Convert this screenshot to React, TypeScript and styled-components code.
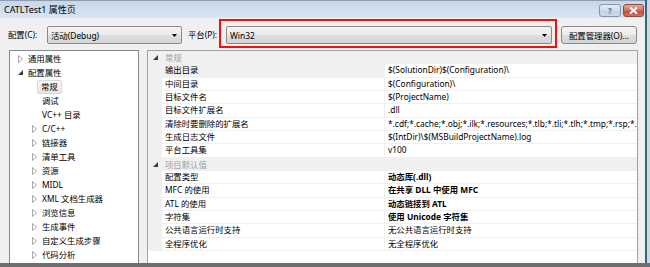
import React from "react";
import styled, { createGlobalStyle } from "styled-components";

const GlobalStyle = createGlobalStyle`
  html, body {
    margin: 0;
    padding: 0;
    background: #ffffff;
  }
  body {
    font-family: "Noto Sans", "Noto Sans CJK SC", sans-serif;
    color: #000;
  }
`;

const Screen = styled.div`
  width: 650px;
  height: 267px;
  background: #6f6f6f;
  overflow: hidden;
`;

const Window = styled.div`
  width: 650px;
  height: 263px;
  box-sizing: border-box;
  border-right: 3px solid #d6d6d6;
  display: flex;
`;

const Frame = styled.div`
  flex: 1;
  min-width: 0;
  display: flex;
  flex-direction: column;
  border-right: 2px solid #2c6985;
  background: #f0f0f0;
`;

const TitleBar = styled.div`
  height: 18px;
  box-sizing: border-box;
  border-top: 1px solid #8e9cae;
  background: linear-gradient(#c7d6ea, #dae5f2);
  display: flex;
  align-items: flex-start;
  padding-left: 4px;
`;

const Title = styled.div`
  flex: 1;
  font-size: 9px;
  line-height: 17px;
`;

const CaptionButtons = styled.div`
  display: flex;
  gap: 2px;
  margin-top: 3px;
  margin-right: 1px;
`;

const CaptionButton = styled.div<{ $close?: boolean }>`
  width: ${(p) => (p.$close ? 21 : 22)}px;
  height: 13px;
  box-sizing: border-box;
  border: 1px solid ${(p) => (p.$close ? "#8b4a45" : "#8595ad")};
  border-radius: 3px;
  background: ${(p) =>
    p.$close
      ? "linear-gradient(#e9a99c, #d36b5c 50%, #c44a3b 51%, #d0705f)"
      : "linear-gradient(#e4ecf6, #cfdcec 50%, #c0d0e6 51%, #cfdcee)"};
  display: flex;
  align-items: center;
  justify-content: center;
  color: #5c6f8c;
  font-size: 8px;
  font-weight: bold;
  line-height: 1;
`;

const Body = styled.div`
  flex: 1;
  min-height: 0;
  display: flex;
  flex-direction: column;
`;

const Toolbar = styled.div`
  height: 32px;
  box-sizing: border-box;
  padding-top: 8px;
  display: flex;
  align-items: flex-start;
  font-size: 8.4px;
`;

const FieldLabel = styled.div<{ $left: number; $width: number }>`
  margin-left: ${(p) => p.$left}px;
  width: ${(p) => p.$width}px;
  line-height: 18px;
  white-space: nowrap;
`;

const Combo = styled.div<{ $width: number }>`
  width: ${(p) => p.$width}px;
  height: 18px;
  box-sizing: border-box;
  border: 1px solid #8a8a8a;
  border-radius: 2px;
  background: linear-gradient(#f3f3f3, #ebebeb 50%, #dedede 51%, #d6d6d6);
  display: flex;
  align-items: center;
  padding: 0 4px 0 3px;
`;

const ComboText = styled.span`
  flex: 1;
  white-space: nowrap;
`;

const Highlight = styled.div`
  margin-top: -7px;
  padding: 5px 3px 2px 5px;
  border: 2px solid #ee1111;
`;

const Button = styled.div`
  margin-left: 4px;
  width: 76px;
  height: 18px;
  box-sizing: border-box;
  border: 1px solid #8a8a8a;
  border-radius: 3px;
  background: linear-gradient(#f4f4f4, #ececec 50%, #dfdfdf 51%, #d3d3d3);
  display: flex;
  align-items: center;
  justify-content: center;
  white-space: nowrap;
`;

const Panels = styled.div`
  flex: 1;
  min-height: 0;
  display: flex;
  gap: 8px;
  padding-left: 9px;
  font-size: 8.4px;
`;

const Tree = styled.div`
  width: 130px;
  box-sizing: border-box;
  border: 1px solid #848990;
  border-bottom: none;
  background: #fff;
  padding-top: 0.5px;
`;

const TreeRow = styled.div<{ $level: number }>`
  height: 14px;
  display: flex;
  align-items: center;
  padding-left: ${(p) => 8 + 14 * (p.$level - 1)}px;
  white-space: nowrap;
`;

const Toggle = styled.span`
  width: 9px;
  display: flex;
  align-items: center;
`;

const TreeText = styled.span<{ $selected?: boolean }>`
  margin-left: ${(p) => (p.$selected ? -4 : 0)}px;
  padding: 0 ${(p) => (p.$selected ? 3 : 0)}px;
  height: 12px;
  line-height: 12px;
  border: 1px solid ${(p) => (p.$selected ? "#d9d9d9" : "transparent")};
  border-radius: 2px;
  background: ${(p) => (p.$selected ? "linear-gradient(#f8f8f8, #e6e6e6)" : "none")};
`;

const Grid = styled.div`
  width: 491px;
  box-sizing: border-box;
  border: 1px solid #a3a3a3;
  border-bottom: none;
  background: #fff;
`;

const ROW_H = "13.333px";

const GroupRow = styled.div`
  height: ${ROW_H};
  display: flex;
  align-items: center;
  background: #f0f0f0;
  color: #a2a2a2;
`;

const Margin = styled.div`
  width: 14px;
  align-self: stretch;
  background: #f0f0f0;
  display: flex;
  align-items: center;
  padding-left: 5px;
  box-sizing: border-box;
`;

const PropRow = styled.div`
  height: ${ROW_H};
  display: flex;
`;

const Cell = styled.div<{ $width?: number; $bold?: boolean; $selected?: boolean }>`
  ${(p) => (p.$width ? `width: ${p.$width}px;` : "flex: 1; min-width: 0;")}
  box-sizing: border-box;
  padding-left: 3px;
  border-bottom: 1px solid #f0f0f0;
  border-left: ${(p) => (p.$width ? "none" : "1px solid #f0f0f0")};
  background: ${(p) => (p.$selected ? "#f0f0f0" : "#fff")};
  font-weight: ${(p) => (p.$bold ? 700 : 400)};
  line-height: 12.333px;
  white-space: nowrap;
  overflow: hidden;
`;

const GroupText = styled.div`
  padding-left: 3px;
  line-height: ${ROW_H};
`;

const Collapsed = () => (
  <svg width="5" height="8" viewBox="0 0 5 8">
    <path d="M0.5 0.5 L4.5 4 L0.5 7.5 Z" fill="none" stroke="#a9a9a9" strokeWidth="1" />
  </svg>
);

const Expanded = () => (
  <svg width="5" height="5" viewBox="0 0 5 5">
    <path d="M5 0 L5 5 L0 5 Z" fill="#3c3c3c" />
  </svg>
);

const DropArrow = () => (
  <svg width="5" height="3" viewBox="0 0 5 3">
    <path d="M0 0 L5 0 L2.5 3 Z" fill="#000" />
  </svg>
);

type TreeItem = { text: string; level: number; state?: "c" | "e"; selected?: boolean };

const treeItems: TreeItem[] = [
  { text: "通用属性", level: 1, state: "c" },
  { text: "配置属性", level: 1, state: "e" },
  { text: "常规", level: 2, selected: true },
  { text: "调试", level: 2 },
  { text: "VC++ 目录", level: 2 },
  { text: "C/C++", level: 2, state: "c" },
  { text: "链接器", level: 2, state: "c" },
  { text: "清单工具", level: 2, state: "c" },
  { text: "资源", level: 2, state: "c" },
  { text: "MIDL", level: 2, state: "c" },
  { text: "XML 文档生成器", level: 2, state: "c" },
  { text: "浏览信息", level: 2, state: "c" },
  { text: "生成事件", level: 2, state: "c" },
  { text: "自定义生成步骤", level: 2, state: "c" },
  { text: "代码分析", level: 2, state: "c" },
];

type Prop = { name: string; value: string; bold?: boolean; selected?: boolean };

const groups: { title: string; props: Prop[] }[] = [
  {
    title: "常规",
    props: [
      { name: "输出目录", value: "$(SolutionDir)$(Configuration)\\", selected: true },
      { name: "中间目录", value: "$(Configuration)\\" },
      { name: "目标文件名", value: "$(ProjectName)" },
      { name: "目标文件扩展名", value: ".dll" },
      {
        name: "清除时要删除的扩展名",
        value:
          "*.cdf;*.cache;*.obj;*.ilk;*.resources;*.tlb;*.tli;*.tlh;*.tmp;*.rsp;*.pgc;*.pgd;*.meta;$(TargetPath);$(ExtensionsToDeleteOnClean)",
      },
      { name: "生成日志文件", value: "$(IntDir)\\$(MSBuildProjectName).log" },
      { name: "平台工具集", value: "v100" },
    ],
  },
  {
    title: "项目默认值",
    props: [
      { name: "配置类型", value: "动态库(.dll)", bold: true },
      { name: "MFC 的使用", value: "在共享 DLL 中使用 MFC", bold: true },
      { name: "ATL 的使用", value: "动态链接到 ATL", bold: true },
      { name: "字符集", value: "使用 Unicode 字符集", bold: true },
      { name: "公共语言运行时支持", value: "无公共语言运行时支持" },
      { name: "全程序优化", value: "无全程序优化" },
    ],
  },
];

export default function App() {
  return (
    <Screen>
      <GlobalStyle />
      <Window>
        <Frame>
          <TitleBar>
            <Title>CATLTest1 属性页</Title>
            <CaptionButtons>
              <CaptionButton>?</CaptionButton>
              <CaptionButton $close>
                <svg width="9" height="7" viewBox="0 0 9 7">
                  <path d="M1 0.5 L8 6.5 M8 0.5 L1 6.5" stroke="#fff" strokeWidth="2" />
                </svg>
              </CaptionButton>
            </CaptionButtons>
          </TitleBar>
          <Body>
            <Toolbar>
              <FieldLabel $left={8} $width={39}>配置(C):</FieldLabel>
              <Combo $width={135}>
                <ComboText>活动(Debug)</ComboText>
                <DropArrow />
              </Combo>
              <FieldLabel $left={6} $width={31}>平台(P):</FieldLabel>
              <Highlight>
                <Combo $width={326}>
                  <ComboText>Win32</ComboText>
                  <DropArrow />
                </Combo>
              </Highlight>
              <Button>配置管理器(O)...</Button>
            </Toolbar>
            <Panels>
              <Tree>
                {treeItems.map((it) => (
                  <TreeRow key={it.text} $level={it.level}>
                    <Toggle>
                      {it.state === "c" && <Collapsed />}
                      {it.state === "e" && <Expanded />}
                    </Toggle>
                    <TreeText $selected={it.selected}>{it.text}</TreeText>
                  </TreeRow>
                ))}
              </Tree>
              <Grid>
                {groups.map((g) => (
                  <React.Fragment key={g.title}>
                    <GroupRow>
                      <Margin>
                        <Expanded />
                      </Margin>
                      <GroupText>{g.title}</GroupText>
                    </GroupRow>
                    {g.props.map((p) => (
                      <PropRow key={p.name}>
                        <Margin />
                        <Cell $width={222} $selected={p.selected}>
                          {p.name}
                        </Cell>
                        <Cell $bold={p.bold}>{p.value}</Cell>
                      </PropRow>
                    ))}
                  </React.Fragment>
                ))}
              </Grid>
            </Panels>
          </Body>
        </Frame>
      </Window>
    </Screen>
  );
}
